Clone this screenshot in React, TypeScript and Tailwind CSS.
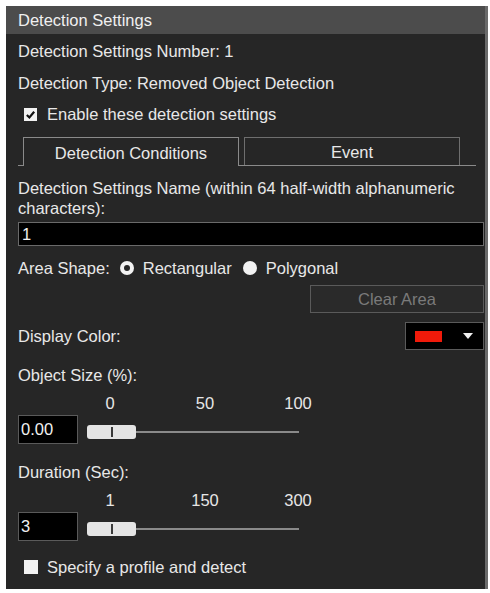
import { useState } from 'react';

const FONT = { fontFamily: '"Liberation Sans", Arial, sans-serif' };

function Slider({ labels }: { labels: string[] }) {
  return (
    <div className="mt-[2px] flex flex-col">
      <div className="flex h-[26px] items-center text-[16.5px] text-[#e6e6e6]">
        <span className="ml-[8px] w-[30px] text-center">{labels[0]}</span>
        <span className="ml-[65px] w-[30px] text-center">{labels[1]}</span>
        <span className="ml-[58px] w-[40px] text-center">{labels[2]}</span>
      </div>
      <div className="relative mt-[1px] h-[30px] w-[212px]">
        <div className="absolute left-0 right-0 top-[14px] h-[2px] bg-[#8a8a8a]" />
        <div className="absolute left-0 top-[8px] flex h-[14px] w-[49px] items-center justify-center rounded-[3px] bg-[#e4e4e4]">
          <div className="h-[10px] w-[2px] bg-[#3a3a3a]" />
        </div>
      </div>
    </div>
  );
}

export default function App() {
  const [enabled, setEnabled] = useState(true);
  const [profile, setProfile] = useState(false);
  const [shape, setShape] = useState('rect');

  return (
    <div className="h-[593px] w-[490px] bg-white pl-[6px] pt-[6px]" style={FONT}>
      <div className="flex h-[583px] w-[482px] flex-col border-r-[3px] border-[#6a6a6a] bg-[#262626] text-[16.5px] text-[#e8e8e8]">
        {/* Header */}
        <div className="flex h-[28px] items-center bg-[#4c4c4c] pl-[12px] text-[#f0f0f0]">
          Detection Settings
        </div>

        <div className="flex flex-col pl-[12px] pr-[1px]">
          <div className="mt-[1px] h-[32px] leading-[32px]">Detection Settings Number: 1</div>
          <div className="h-[32px] leading-[32px]">Detection Type: Removed Object Detection</div>
          <label className="flex h-[30px] items-center gap-[10px] pl-[6px]">
            <span
              onClick={() => setEnabled(!enabled)}
              className="flex h-[13px] w-[13px] items-center justify-center bg-[#f2f2f2]"
            >
              {enabled && (
                <svg viewBox="0 0 12 12" className="h-[11px] w-[11px]">
                  <path d="M2 6.5 L4.8 9.2 L10 3" fill="none" stroke="#111" strokeWidth="2.4" />
                </svg>
              )}
            </span>
            <span>Enable these detection settings</span>
          </label>

          {/* Tabs */}
          <div className="mt-[8px] flex h-[29px] items-end">
            <div className="h-[1px] w-[5px] bg-[#8a8a8a]" />
            <div className="flex h-[29px] w-[216px] items-center justify-center border-x border-t border-[#8a8a8a] pt-[2px] text-[#e8e8e8]">
              Detection Conditions
            </div>
            <div className="flex h-[29px] flex-1 flex-col">
              <div className="flex flex-1">
                <div className="w-[5px]" />
                <div className="flex w-[216px] items-center justify-center border-x border-t border-[#6e6e6e] pt-[2px]">
                  Event
                </div>
              </div>
              <div className="mr-[8px] h-[2px] bg-[#8a8a8a]" />
            </div>
          </div>

          <div className="mt-[12px] leading-[20px]">
            Detection Settings Name (within 64 half-width alphanumeric characters):
          </div>
          <div className="mt-[4px] flex h-[24px] items-center border border-[#6a6a6a] bg-black pl-[3px] text-[#f0f0f0]">
            1
          </div>

          <div className="mt-[9px] flex h-[26px] items-center">
            <span>Area Shape:</span>
            <span
              onClick={() => setShape('rect')}
              className="ml-[10px] flex h-[14px] w-[14px] items-center justify-center rounded-full bg-[#f2f2f2]"
            >
              {shape === 'rect' && <span className="h-[6px] w-[6px] rounded-full bg-[#262626]" />}
            </span>
            <span className="ml-[9px]">Rectangular</span>
            <span
              onClick={() => setShape('poly')}
              className="ml-[11px] flex h-[14px] w-[14px] items-center justify-center rounded-full bg-[#f2f2f2]"
            >
              {shape === 'poly' && <span className="h-[6px] w-[6px] rounded-full bg-[#262626]" />}
            </span>
            <span className="ml-[9px]">Polygonal</span>
          </div>

          <div className="mt-[4px] flex justify-end">
            <button className="h-[28px] w-[174px] border border-[#5a5a5a] bg-[#2a2a2a] text-[16.5px] text-[#7a7a7a]">
              Clear Area
            </button>
          </div>

          <div className="mt-[9px] flex h-[28px] items-center justify-between">
            <span>Display Color:</span>
            <div className="flex h-[28px] w-[79px] items-center border border-[#5a5a5a] bg-black pl-[9px]">
              <div className="h-[11px] w-[27px] bg-[#f01a0a]" />
              <svg viewBox="0 0 10 6" className="ml-[21px] h-[6px] w-[10px]">
                <path d="M0 0 H10 L5 6 Z" fill="#f0f0f0" />
              </svg>
            </div>
          </div>

          <div className="mt-[12px] h-[26px] leading-[26px]">Object Size (%):</div>
          <div className="flex">
            <div className="w-[69px]" />
            <Slider labels={['0', '50', '100']} />
          </div>
          <div className="-mt-[32px] flex h-[29px] w-[60px] items-center border border-[#5a5a5a] bg-black pl-[2px] text-[#f0f0f0]">
            0.00
          </div>

          <div className="mt-[15px] h-[26px] leading-[26px]">Duration (Sec):</div>
          <div className="flex">
            <div className="w-[69px]" />
            <Slider labels={['1', '150', '300']} />
          </div>
          <div className="-mt-[32px] flex h-[29px] w-[60px] items-center border border-[#5a5a5a] bg-black pl-[2px] text-[#f0f0f0]">
            3
          </div>

          <label className="mt-[18px] flex h-[16px] items-center gap-[9px] pl-[6px]">
            <span
              onClick={() => setProfile(!profile)}
              className="flex h-[14px] w-[14px] items-center justify-center bg-[#f2f2f2]"
            >
              {profile && (
                <svg viewBox="0 0 12 12" className="h-[11px] w-[11px]">
                  <path d="M2 6.5 L4.8 9.2 L10 3" fill="none" stroke="#111" strokeWidth="2.4" />
                </svg>
              )}
            </span>
            <span>Specify a profile and detect</span>
          </label>
        </div>
      </div>
    </div>
  );
}
